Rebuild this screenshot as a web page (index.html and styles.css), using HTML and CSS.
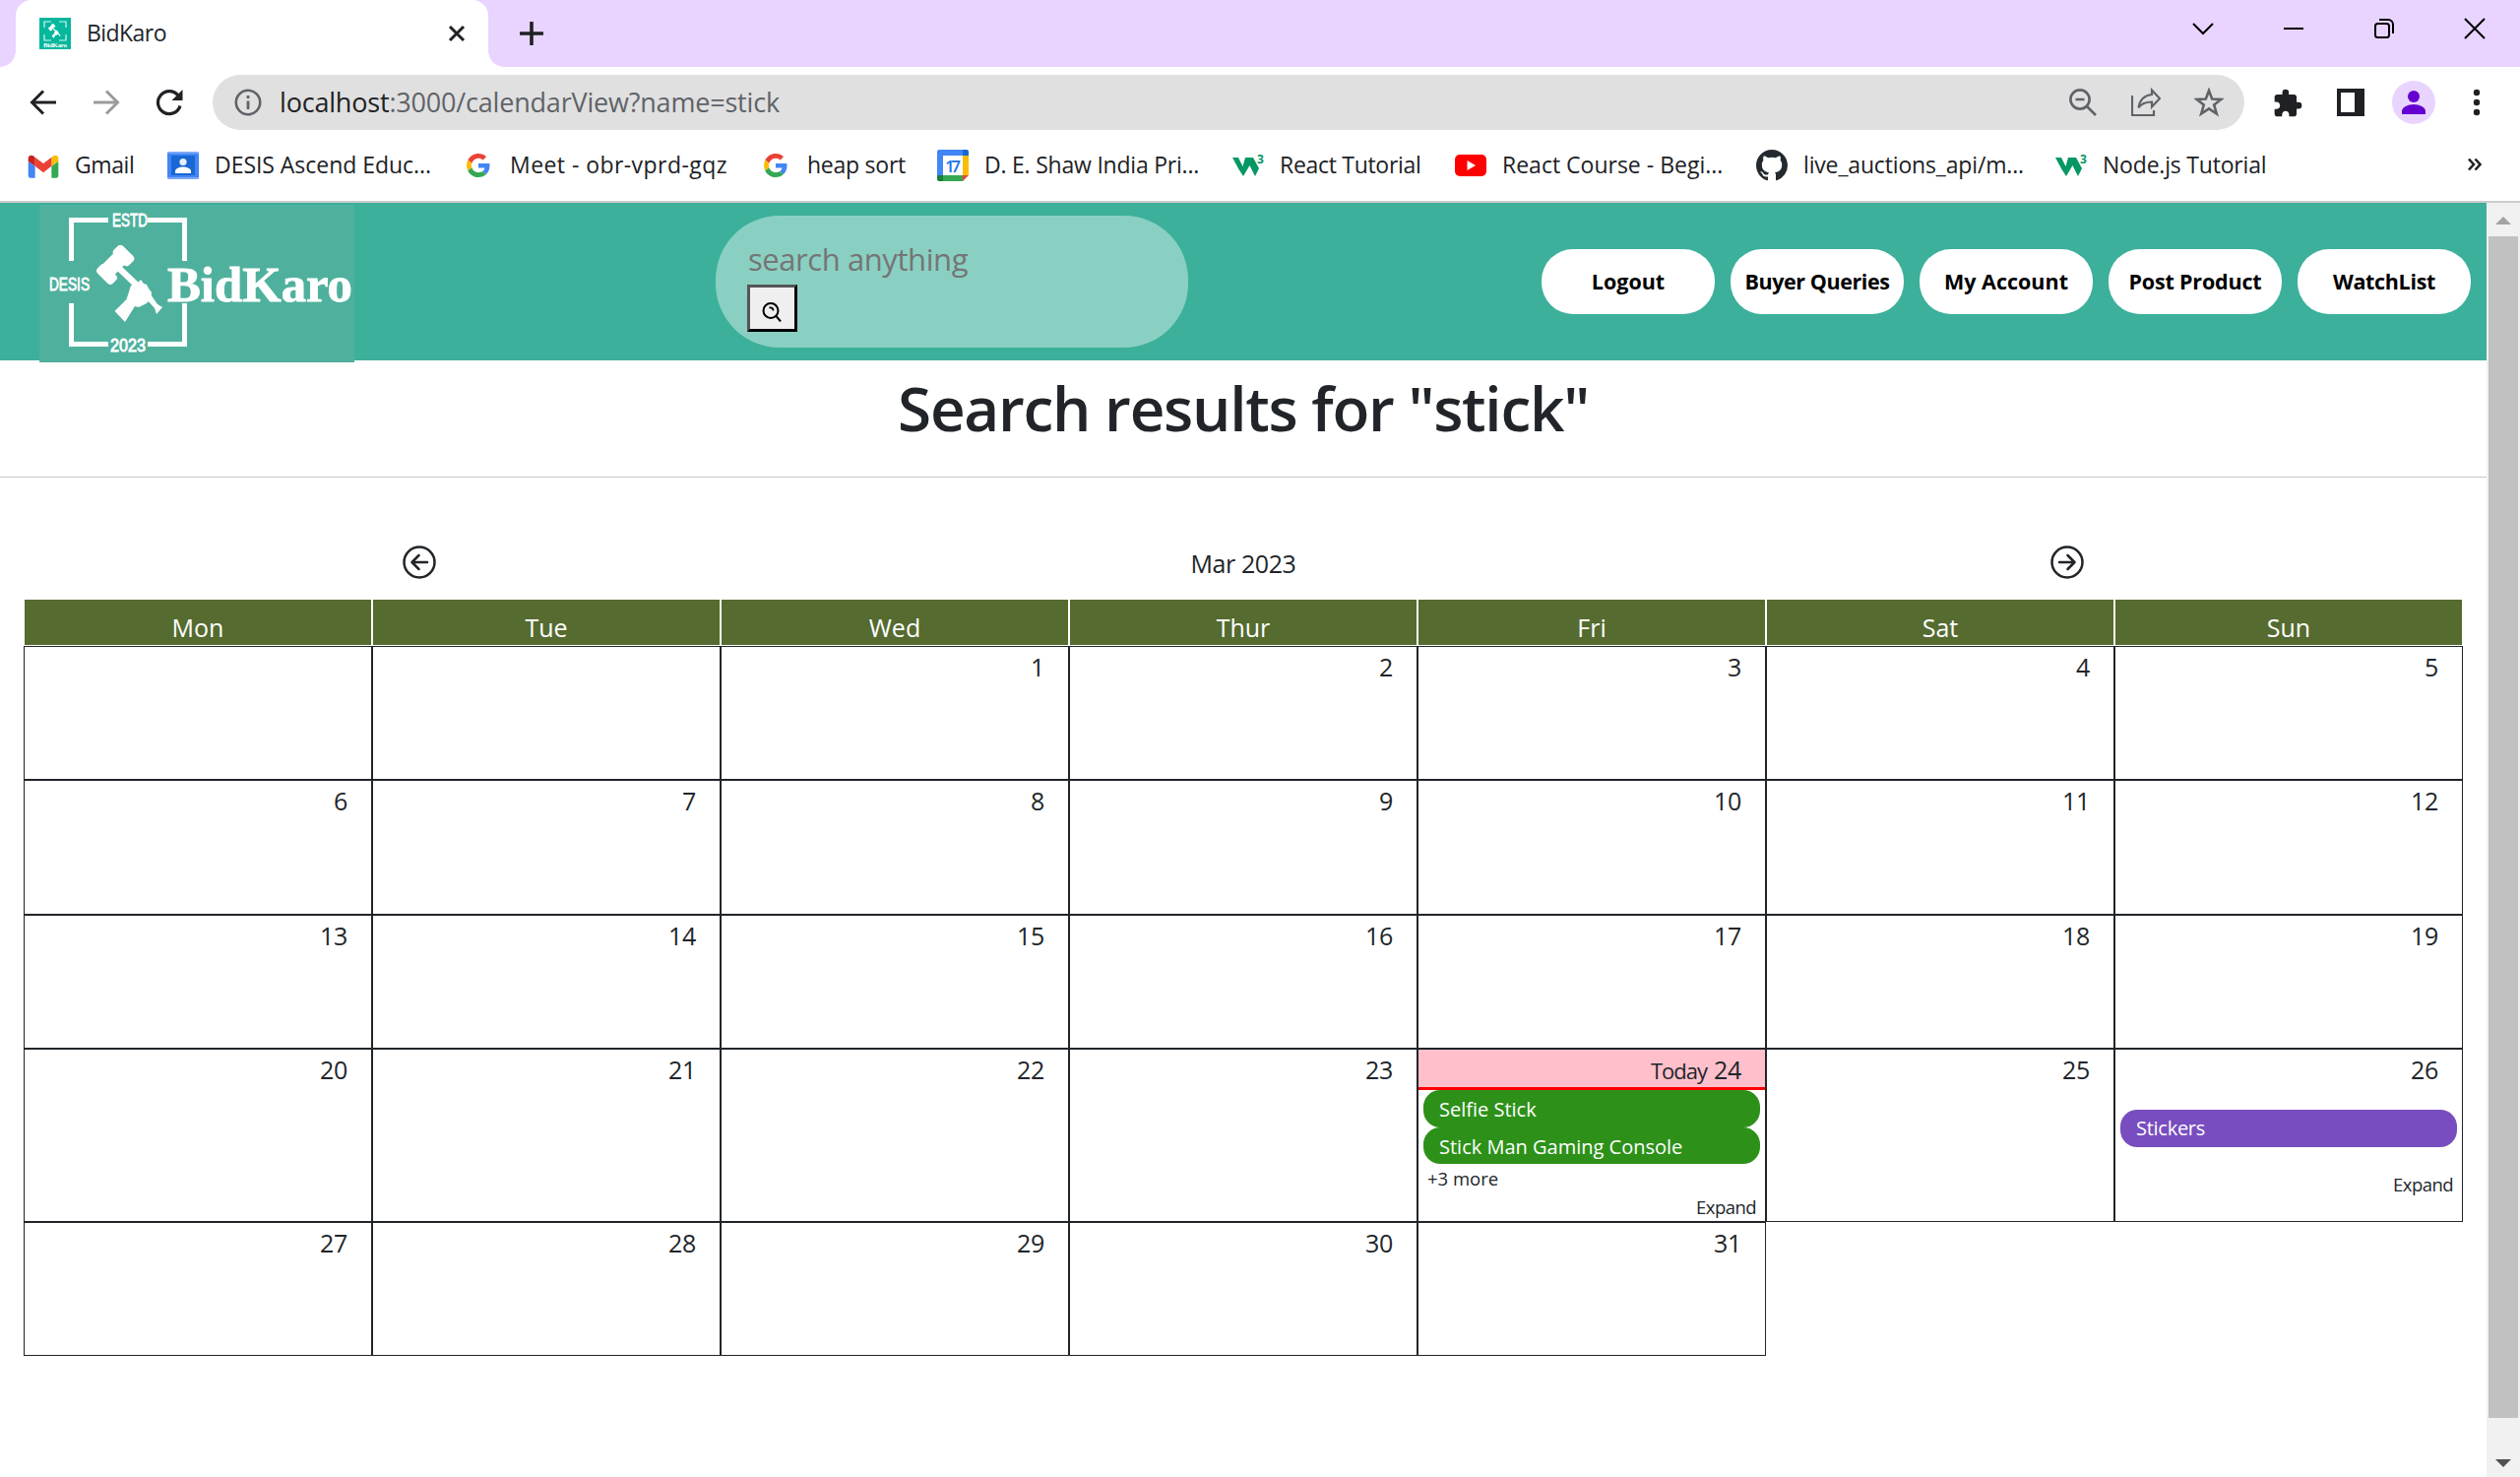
FILE: index.html
```
<!DOCTYPE html>
<html lang="en">
<head>
<meta charset="utf-8">
<title>BidKaro</title>
<link rel="stylesheet" href="styles.css">
</head>
<body>
<svg class="defs" aria-hidden="true">
  <symbol id="google" viewBox="0 0 48 48">
    <path fill="#EA4335" d="M24 9.5c3.54 0 6.71 1.22 9.21 3.6l6.85-6.85C35.9 2.38 30.47 0 24 0 14.62 0 6.51 5.38 2.56 13.22l7.98 6.19C12.43 13.72 17.74 9.5 24 9.5z"/>
    <path fill="#4285F4" d="M46.98 24.55c0-1.57-.15-3.09-.38-4.55H24v9.02h12.94c-.58 2.96-2.26 5.48-4.78 7.18l7.73 6c4.51-4.18 7.09-10.36 7.09-17.65z"/>
    <path fill="#FBBC05" d="M10.53 28.59c-.48-1.45-.76-2.99-.76-4.59s.27-3.14.76-4.59l-7.98-6.19C.92 16.46 0 20.12 0 24c0 3.88.92 7.54 2.56 10.78l7.97-6.19z"/>
    <path fill="#34A853" d="M24 48c6.48 0 11.93-2.13 15.89-5.81l-7.73-6c-2.15 1.45-4.92 2.3-8.16 2.3-6.26 0-11.57-4.22-13.47-9.91l-7.98 6.19C6.51 42.62 14.62 48 24 48z"/>
  </symbol>
  <symbol id="gavel" viewBox="98 249 68 80">
    <g fill="#fff">
      <rect x="-12" y="-8" width="24" height="16" transform="translate(117 267) rotate(-45)"/>
      <rect x="-6.500" y="-11" width="13" height="22" rx="4" transform="translate(125.500 259.500) rotate(-45)"/>
      <rect x="-6" y="-11" width="12" height="22" rx="4" transform="translate(108.500 278.500) rotate(-45)"/>
      <path d="M119 275l4.500-4.500 19 18-4.500 4.500zM148 303l5-4 7 10 5 3-6 7-2-6z"/>
      <path d="M133 290l7-3 3-3 3 4 3 1 2 4 3 4-1 7-4 4-8 4-4-1-10 16-10.500-11 12-12z"/>
    </g>
  </symbol>
</svg>

<div class="tabstrip">
  <div class="tab">
    <svg class="favicon" viewBox="0 0 32 32"><rect width="32" height="32" fill="#05B79C"/><path d="M5 10V4h7m8 0h7v6M5 17v6h7m8 0h7v-6" fill="none" stroke="#d6f5ee" stroke-width="1.200"/><use href="#gavel" x="9" y="6" width="13" height="15"/><text x="4" y="30" font-family="Liberation Serif, serif" font-weight="700" font-size="7" textLength="24" fill="#fff">BidKaro</text></svg>
    <span class="tab-title">BidKaro</span>
    <svg class="tab-close" viewBox="0 0 18 18"><path d="M2 2l14 14M16 2L2 16" stroke="#202124" stroke-width="3"/></svg>
  </div>
  <svg class="new-tab" viewBox="0 0 24 24"><path d="M12 1v22M1 12h22" stroke="#202124" stroke-width="3.600" stroke-linecap="round"/></svg>
  <div class="window-controls">
    <svg viewBox="0 0 20 20"><path d="M0 5l10 10L20 5" fill="none" stroke="#000" stroke-width="2"/></svg>
    <svg viewBox="0 0 20 20"><path d="M0 10h20" stroke="#000" stroke-width="2"/></svg>
    <svg viewBox="0 0 20 20"><rect x="1" y="5" width="14" height="14" rx="2.500" fill="none" stroke="#000" stroke-width="2"/><path d="M5 1h9a5 5 0 0 1 5 5v9" fill="none" stroke="#000" stroke-width="2"/></svg>
    <svg viewBox="0 0 20 20"><path d="M0 0l20 20M20 0L0 20" stroke="#000" stroke-width="2"/></svg>
  </div>
</div>

<div class="toolbar">
  <svg class="nav-icon" viewBox="0 0 28 28"><path d="M27 14H3M14 2.500L2.500 14 14 25.500" fill="none" stroke="#202124" stroke-width="3"/></svg>
  <svg class="nav-icon" viewBox="0 0 28 28"><path d="M1 14h24M14 2.500L25.500 14 14 25.500" fill="none" stroke="#9b9b9b" stroke-width="3"/></svg>
  <svg class="nav-icon" viewBox="0 0 28 28"><path d="M25 17.500A11.500 11.500 0 1 1 23 7" fill="none" stroke="#202124" stroke-width="3.200"/><path d="M27.500 1v11h-11z" fill="#202124"/></svg>
  <div class="omnibox">
    <svg class="info" viewBox="0 0 28 28"><circle cx="14" cy="14" r="12.200" fill="none" stroke="#5f6368" stroke-width="2.600"/><path d="M14 12.500V21M14 7v3" stroke="#5f6368" stroke-width="2.800"/></svg>
    <span class="url"><span class="host">localhost</span>:3000/calendarView?name=stick</span>
    <svg class="omni-icon" viewBox="0 0 30 30"><circle cx="12" cy="12" r="9.600" fill="none" stroke="#5f6368" stroke-width="2.600"/><path d="M7.500 12h9M19 19l9 9" stroke="#5f6368" stroke-width="2.600"/></svg>
    <svg class="omni-icon" viewBox="0 0 30 30"><path d="M1 8v20h22v-5" fill="none" stroke="#5f6368" stroke-width="2.200"/><path d="M21 2.500l8 8.500-8 8.500v-5c-6 0-10.500 1.500-13.500 6C8.500 13 13 8 21 7z" fill="none" stroke="#5f6368" stroke-width="2.200"/></svg>
    <svg class="omni-icon" viewBox="0 0 30 30"><path d="M15 3l3.200 8.500 9.300.4-7.300 5.600 2.600 9L15 21.300 7.200 26.500l2.600-9-7.300-5.600 9.300-.4z" fill="none" stroke="#5f6368" stroke-width="2.600"/></svg>
  </div>
  <svg class="ext-icon" viewBox="1.500 .5 22 22"><path fill="#202124" d="M20.500 11H19V7c0-1.100-.9-2-2-2h-4V3.500a2.500 2.500 0 0 0-5 0V5H4c-1.100 0-1.990.9-1.990 2v3.800H3.500c1.490 0 2.700 1.210 2.700 2.700s-1.210 2.700-2.700 2.700H2V20c0 1.100.9 2 2 2h3.800v-1.500c0-1.490 1.210-2.700 2.700-2.700 1.490 0 2.700 1.210 2.700 2.700V22H17c1.100 0 2-.9 2-2v-4h1.500a2.500 2.500 0 0 0 0-5z"/></svg>
  <svg class="panel-icon" viewBox="0 0 28 28"><path fill="#202124" fill-rule="evenodd" d="M0 0h28v28H0zM4 4v20h14V4z"/></svg>
  <svg class="avatar" viewBox="0 0 44 44"><circle cx="22" cy="22" r="22" fill="#E8D4FF"/><circle cx="22" cy="16" r="6" fill="#6400D2"/><path d="M10 34v-3c0-4 6-7 12-7s12 3 12 7v3z" fill="#6400D2"/></svg>
  <svg class="menu-dots" viewBox="0 0 8 28"><circle cx="4" cy="4" r="3.200" fill="#202124"/><circle cx="4" cy="14" r="3.200" fill="#202124"/><circle cx="4" cy="24" r="3.200" fill="#202124"/></svg>
</div>

<div class="bookmarks">
  <div class="bm"><svg class="bm-icon" viewBox="51 37.500 90 92"><path fill="#4285f4" d="M58 120h14V86l-20-15v43c0 3.320 2.690 6 6 6"/><path fill="#34a853" d="M120 120h14c3.320 0 6-2.690 6-6V71l-20 15"/><path fill="#fbbc04" d="M120 60v26l20-15v-8c0-7.420-8.470-11.650-14.400-7.200"/><path fill="#ea4335" d="M72 86V60l24 18 24-18v26L96 104"/><path fill="#c5221f" d="M52 63v8l20 15V60l-5.600-4.200c-5.940-4.450-14.400-.22-14.400 7.200"/></svg><span class="t-gmail">Gmail</span></div>
  <div class="bm"><svg class="bm-icon" viewBox="0 0 32 32"><rect y="2" width="32" height="28" rx="1" fill="#7AA9F7"/><rect y="4" width="32" height="24" fill="#4285F4"/><rect x="4" y="6" width="24" height="20" fill="#1967D2"/><circle cx="16" cy="12.500" r="3.600" fill="#e8f0fe"/><path d="M8 24v-2c0-3 4-4.500 8-4.500s8 1.500 8 4.500v2z" fill="#fff"/></svg><span class="t-desis">DESIS Ascend Educ...</span></div>
  <div class="bm"><svg class="bm-icon google" viewBox="0 0 48 48"><use href="#google"/></svg><span class="t-meet">Meet - obr-vprd-gqz</span></div>
  <div class="bm"><svg class="bm-icon google" viewBox="0 0 48 48"><use href="#google"/></svg><span class="t-heap">heap sort</span></div>
  <div class="bm"><svg class="bm-icon" viewBox="0 0 32 32"><path d="M2 0h24v6H6v20H0V2a2 2 0 0 1 2-2z" fill="#4285F4"/><path d="M26 0h4a2 2 0 0 1 2 2v4h-6z" fill="#1967D2"/><path d="M26 6h6v20h-6z" fill="#FBBC04"/><path d="M6 26h20v6H6z" fill="#34A853"/><path d="M0 26h6v6H2a2 2 0 0 1-2-2z" fill="#188038"/><path d="M26 26h6l-6 6z" fill="#EA4335"/><path d="M6 6h20v20H6z" fill="#fff"/><text x="16" y="22.500" text-anchor="middle" font-family="Open Sans, sans-serif" font-weight="600" font-size="17" textLength="16" fill="#1a73e8">17</text></svg><span class="t-shaw">D. E. Shaw India Pri...</span></div>
  <div class="bm"><svg class="bm-icon" viewBox="0 0 32 32"><path fill="#059862" d="M0 8h6l4.500 9L13 8h8l6 11-4 8-5.500-11L11 27 6.500 20z"/><text x="25" y="13.500" font-family="Open Sans, sans-serif" font-weight="700" font-size="12" fill="#059862">3</text></svg><span class="t-react">React Tutorial</span></div>
  <div class="bm"><svg class="bm-icon" viewBox="0 0 32 32"><rect y="5" width="32" height="22" rx="5" fill="#f00"/><path d="M12.500 11l8.500 5-8.500 5z" fill="#fff"/></svg><span>React Course - Begi...</span></div>
  <div class="bm"><svg class="bm-icon" viewBox="0 0 16 16"><path fill="#24292f" d="M8 0C3.580 0 0 3.580 0 8c0 3.540 2.290 6.530 5.470 7.590.4.070.55-.17.55-.38 0-.19-.01-.82-.01-1.490-2.010.37-2.530-.49-2.690-.94-.09-.23-.48-.94-.82-1.130-.28-.15-.68-.52-.01-.53.63-.01 1.080.58 1.230.82.72 1.210 1.870.87 2.330.66.07-.52.28-.87.51-1.070-1.780-.2-3.640-.89-3.640-3.950 0-.87.31-1.590.82-2.150-.08-.2-.36-1.020.08-2.120 0 0 .67-.21 2.200.82.64-.18 1.320-.27 2-.27s1.360.09 2 .27c1.530-1.040 2.200-.82 2.200-.82.44 1.100.16 1.920.08 2.120.51.56.82 1.270.82 2.150 0 3.070-1.870 3.750-3.650 3.950.29.25.54.73.54 1.480 0 1.070-.01 1.930-.01 2.200 0 .21.15.46.55.38A8.010 8.010 0 0 0 16 8c0-4.420-3.580-8-8-8z"/></svg><span class="t-live">live_auctions_api/m...</span></div>
  <div class="bm"><svg class="bm-icon" viewBox="0 0 32 32"><path fill="#059862" d="M0 8h6l4.500 9L13 8h8l6 11-4 8-5.500-11L11 27 6.500 20z"/><text x="25" y="13.500" font-family="Open Sans, sans-serif" font-weight="700" font-size="12" fill="#059862">3</text></svg><span class="t-node">Node.js Tutorial</span></div>
  <svg class="overflow" viewBox="0 0 14 14"><path d="M1 1.500L6 7l-5 5.500M7.500 1.500l5 5.500-5 5.500" fill="none" stroke="#202124" stroke-width="2.600"/></svg>
</div>

<div class="viewport">
  <main class="page">
    <header class="site-header">
      <svg class="logo" viewBox="40 208 320 160">
        <rect x="40" y="208" width="320" height="160" fill="#4FB19D"/>
        <path d="M72.500 265v-41.500H110M150 223.500h37.500V265M72.500 308v41.500H110M150 349.500h37.500V308" fill="none" stroke="#fff" stroke-width="5"/>
        <g fill="#fff" stroke="#fff" stroke-width=".8" font-family="Liberation Sans, Arial, sans-serif" font-size="17.500">
          <text x="114" y="230" textLength="36" lengthAdjust="spacingAndGlyphs">ESTD</text>
          <text x="50" y="295" textLength="41" lengthAdjust="spacingAndGlyphs">DESIS</text>
          <text x="112" y="356.500" textLength="36" lengthAdjust="spacingAndGlyphs">2023</text>
        </g>
        <use href="#gavel" x="98" y="249" width="68" height="80"/>
        <text x="170" y="305.500" textLength="188" lengthAdjust="spacingAndGlyphs" font-family="Liberation Serif, serif" font-weight="700" font-size="51" fill="#fff" stroke="#fff" stroke-width=".8">BidKaro</text>
      </svg>
      <div class="search">
        <span class="placeholder">search anything</span>
        <button class="search-btn"><svg viewBox="0 0 20 20"><circle cx="9" cy="8.500" r="7.500" fill="none" stroke="#000" stroke-width="2"/><path d="M14.500 14l4.500 5.500" stroke="#000" stroke-width="2"/><path d="M7.500 5.500c2.500-.5 4 1 4 3" fill="none" stroke="#000" stroke-width="1.800"/></svg></button>
      </div>
      <nav class="site-nav">
        <button>Logout</button>
        <button class="t-buyer">Buyer Queries</button>
        <button>My Account</button>
        <button class="t-post">Post Product</button>
        <button class="t-watch">WatchList</button>
      </nav>
    </header>
    <h1 class="title">Search results for "stick"</h1>
    <div class="month-nav">
      <svg viewBox="0 0 34 34"><circle cx="17" cy="17" r="15.500" fill="none" stroke="#212529" stroke-width="2.500"/><path d="M25 17H10M16.500 10L9.500 17l7 7" fill="none" stroke="#212529" stroke-width="2.500" stroke-linecap="round" stroke-linejoin="round"/></svg>
      <span>Mar 2023</span>
      <svg viewBox="0 0 34 34"><circle cx="17" cy="17" r="15.500" fill="none" stroke="#212529" stroke-width="2.500"/><path d="M9 17h15M17.500 10l7 7-7 7" fill="none" stroke="#212529" stroke-width="2.500" stroke-linecap="round" stroke-linejoin="round"/></svg>
    </div>
    <div class="calendar">
      <div class="th">Mon</div><div class="th">Tue</div><div class="th">Wed</div><div class="th">Thur</div><div class="th">Fri</div><div class="th">Sat</div><div class="th">Sun</div>
      <div class="td"></div><div class="td"></div><div class="td"><p>1</p></div><div class="td"><p>2</p></div><div class="td"><p>3</p></div><div class="td"><p>4</p></div><div class="td"><p>5</p></div>
      <div class="td"><p>6</p></div><div class="td"><p>7</p></div><div class="td"><p>8</p></div><div class="td"><p>9</p></div><div class="td"><p>10</p></div><div class="td"><p>11</p></div><div class="td"><p>12</p></div>
      <div class="td"><p>13</p></div><div class="td"><p>14</p></div><div class="td"><p>15</p></div><div class="td"><p>16</p></div><div class="td"><p>17</p></div><div class="td"><p>18</p></div><div class="td"><p>19</p></div>
      <div class="td"><p>20</p></div><div class="td"><p>21</p></div><div class="td"><p>22</p></div><div class="td"><p>23</p></div>
      <div class="td">
        <p class="today"><small>Today</small>24</p>
        <div class="event">Selfie Stick</div>
        <div class="event">Stick Man Gaming Console</div>
        <div class="more">+3 more</div>
        <div class="expand">Expand</div>
      </div>
      <div class="td"><p>25</p></div>
      <div class="td">
        <p>26</p>
        <div class="event purple">Stickers</div>
        <div class="expand late">Expand</div>
      </div>
      <div class="td"><p>27</p></div><div class="td"><p>28</p></div><div class="td"><p>29</p></div><div class="td"><p>30</p></div><div class="td"><p>31</p></div>
    </div>
  </main>
  <div class="scrollbar">
    <svg class="arrow" viewBox="0 0 16 8"><path d="M0 8l8-8 8 8z" fill="#a3a3a3"/></svg>
    <div class="thumb"></div>
    <svg class="arrow down" viewBox="0 0 16 8"><path d="M0 0l8 8 8-8z" fill="#505050"/></svg>
  </div>
</div>
</body>
</html>
```
FILE: styles.css
```
* { box-sizing: border-box; margin: 0; padding: 0; }
body {
  width: 2560px; height: 1500px; overflow: hidden; background: #fff;
  display: flex; flex-direction: column;
  font-family: "Open Sans", "Segoe UI", sans-serif; color: #212529;
}
svg { display: block; flex: none; }
.defs { position: absolute; width: 0; height: 0; }

/* tab strip */
.tabstrip { height: 68px; flex: none; background: #E8D4FF; display: flex; align-items: center; padding-left: 16px; }
.tab {
  position: relative; width: 480px; height: 68px; background: #fff; border-radius: 16px 16px 0 0;
  display: flex; align-items: center; padding: 0 23px 0 24px;
}
.tab::before, .tab::after { content: ""; position: absolute; bottom: 0; width: 16px; height: 16px; }
.tab::before { left: -16px; background: radial-gradient(circle at 0 0, transparent 15.5px, #fff 16px); }
.tab::after { right: -16px; background: radial-gradient(circle at 100% 0, transparent 15.5px, #fff 16px); }
.favicon { width: 32px; height: 32px; }
.tab-title { margin-left: 16px; font-size: 23px; line-height: 34px; letter-spacing: -.55px; flex: 1; padding-bottom: 2px; }
.tab-close { width: 18px; height: 18px; }
.new-tab { width: 24px; height: 24px; margin-left: 32px; }
.window-controls { display: flex; gap: 72px; margin: 0 36px 10px auto; }
.window-controls svg { width: 20px; height: 20px; overflow: visible; }

/* toolbar */
.toolbar { height: 72px; flex: none; display: flex; align-items: center; padding: 0 40px 0 30px; }
.nav-icon { width: 28px; height: 28px; margin-right: 36px; }
.omnibox {
  width: 2064px; height: 56px; margin-left: -6px; border-radius: 28px; background: #E0E0E0;
  display: flex; align-items: center; padding: 0 21px 0 22px; flex: none;
}
.info { width: 28px; height: 28px; }
.url { flex: 1; margin-left: 18px; font-size: 27px; letter-spacing: -.19px; color: #5f6368; line-height: 54px; }
.host { color: #202124; }
.omni-icon { width: 30px; height: 30px; margin-left: 34px; }
.ext-icon { width: 29px; height: 29px; margin-left: 30px; }
.panel-icon { width: 28px; height: 28px; margin-left: 35px; }
.avatar { width: 44px; height: 44px; margin-left: 28px; }
.menu-dots { width: 8px; height: 28px; margin-left: 38px; }

/* bookmarks */
.bookmarks {
  height: 66px; flex: none; border-bottom: 2px solid #ccc; padding: 0 0 8px 28px;
  display: grid; grid-template-columns: 142px 300px 302px 180px 300px 226px 306px 304px 391px auto;
  align-items: center; justify-content: start;
}
.bm { display: flex; align-items: center; gap: 16px; font-size: 23px; line-height: 36px; white-space: nowrap; color: #202124; }
.bm span { padding-bottom: 3px; }
.bm-icon { width: 32px; height: 32px; }
.google { padding: 4px; }
.overflow { width: 14px; height: 14px; margin: 0 0 2px 28px; }
.t-gmail { letter-spacing: -.4px; }
.t-desis { letter-spacing: -.04px; }
.t-meet { letter-spacing: .44px; }
.t-heap { letter-spacing: -.25px; }
.t-shaw { letter-spacing: -.22px; }
.t-react { letter-spacing: -.3px; }
.t-live { letter-spacing: -.16px; }
.t-node { letter-spacing: -.2px; }

/* page */
.viewport { flex: 1; display: flex; min-height: 0; }
.page { width: 2526px; }
.site-header { height: 160px; background: #3CB09B; display: flex; padding: 2px 16px 0 40px; }
.logo { width: 320px; height: 160px; }
.search {
  width: 480px; height: 134px; margin: 11px 0 0 367px; border-radius: 65px; background: #8AD0C2;
  padding: 20px 32px 0; display: flex; flex-direction: column; align-items: flex-start;
}
.placeholder { font-size: 31px; line-height: 48px; letter-spacing: -.43px; color: #757575; padding-left: 1px; }
.search-btn {
  width: 51px; height: 48px; margin-top: 2px; background: #efefef; border: 3px solid; border-color: #555 #000 #000 #555;
  display: flex; padding: 15px 0 0 12px; border-radius: 0;
}
.search-btn svg { width: 20px; height: 20px; }
.site-nav { margin: 45px 0 0 auto; display: flex; gap: 16px; }
.site-nav button {
  width: 176px; height: 66px; border: 0; border-radius: 32px; background: #fff; color: #000;
  font: 700 21.5px/66px "Open Sans", sans-serif; white-space: nowrap;
}
.site-nav .t-buyer { letter-spacing: -.42px; }
.site-nav .t-post { letter-spacing: -.18px; }
.site-nav .t-watch { letter-spacing: -.34px; }
.title {
  height: 119px; border-bottom: 1px solid #c8c8c8; text-align: center;
  font-size: 62px; font-weight: 600; line-height: 96px; letter-spacing: -1.25px;
}
.month-nav {
  width: 2512px; height: 70px; margin: 53px 7px 0; display: grid; grid-template-columns: repeat(3, 1fr);
  justify-items: center; font-size: 25px; letter-spacing: -.41px; line-height: 69px;
}
.month-nav svg { width: 34px; height: 34px; margin-top: 16px; }

/* calendar */
.calendar { width: 2478px; margin: 0 24px; display: grid; grid-template-columns: repeat(7, 354px); grid-template-rows: 48px 136px 137px 136px 176px 136px; }
.th { background: #556B2F; border: 1px solid #fff; color: #fff; text-align: center; font-size: 25px; line-height: 36px; height: 48px; padding-top: 10px; }
.td { border: 1px solid #212529; }
.td p { font-size: 25px; line-height: 40px; text-align: right; padding-right: 24px; letter-spacing: -.3px; }
.td small { font-size: 22px; letter-spacing: -1px; margin-right: 7px; }
.td .today { background: #FFC0CB; border-bottom: 3px solid red; height: 41px; }
.event {
  height: 38px; margin: 0 5px; padding-left: 16px; border-radius: 17px; background: #2D9119; color: #fff;
  font-size: 20px; line-height: 39px;
}
.event + .event { height: 37px; }
.purple { background: #784DBF; margin-top: 21px; letter-spacing: -.27px; line-height: 38px; }
.more { font-size: 18.5px; line-height: 30px; padding-left: 9px; }
.expand { font-size: 18.5px; line-height: 28px; letter-spacing: -.54px; text-align: right; padding-right: 9px; }
.expand.late { margin-top: 24px; }

/* scrollbar */
.scrollbar { width: 34px; background: #f1f1f1; display: flex; flex-direction: column; align-items: center; padding: 14px 0 10px; }
.arrow { width: 16px; height: 8px; }
.arrow.down { margin-top: auto; }
.thumb { width: 30px; height: 1200px; margin-top: 12px; background: #c1c1c1; }
```
